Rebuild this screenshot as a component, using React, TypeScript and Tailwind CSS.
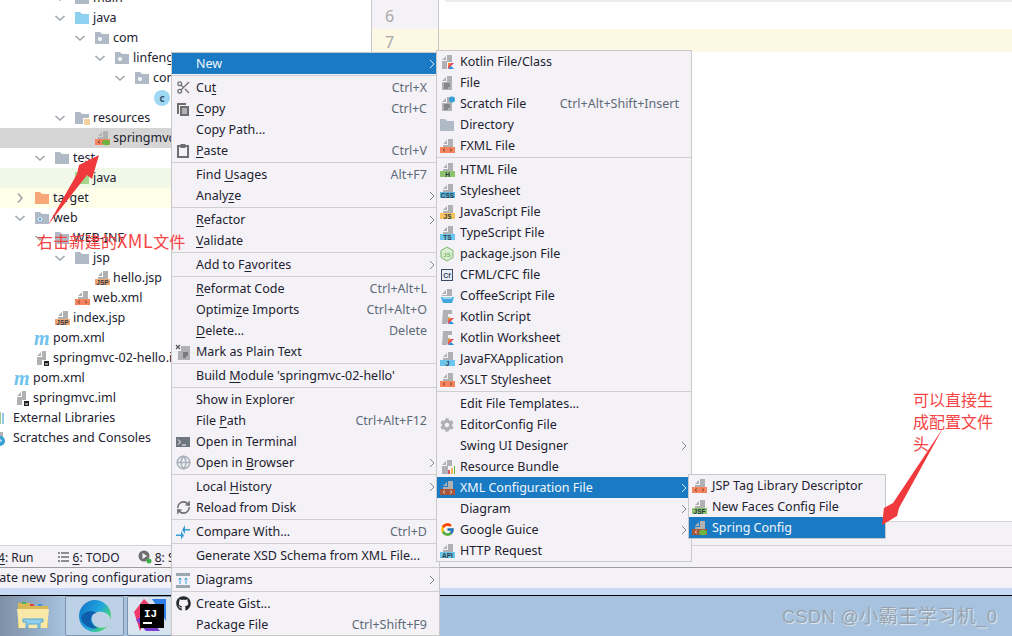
import type { ReactNode } from 'react';
import { Scissors, RefreshCw, Globe } from 'lucide-react';
import { FaGithub, FaCog } from 'react-icons/fa';
import { FcGoogle } from 'react-icons/fc';

type Item = { label: string; shortcut?: string; icon?: ReactNode; arrow?: boolean; active?: boolean };

function FileIcon({ color, text = '', children }: { color: string; text?: string; children?: ReactNode }) {
  return (
    <svg width="16" height="16" viewBox="0 0 16 16">
      <path fill="#afb1b3" d="M4 6 8 2v4zM9 1h5v8H4V7h5z" />
      <rect x="1" y="9" width="15" height="6" fill={color} />
      {text && (
        <text x="8.5" y="14.6" textAnchor="middle" fontSize="6.5" fontWeight="700" fill="#2b3a42" fontFamily="Liberation Sans">
          {text}
        </text>
      )}
      {children}
    </svg>
  );
}

const XmlTag = ({ stroke = '#7a3b1c' }: { stroke?: string }) => (
  <path fill="none" stroke={stroke} strokeWidth="0.8" d="M6 10.500 4 12l2 1.500M11 10.500l2 1.500-2 1.500" />
);
const Xml = () => <FileIcon color="#f4845f"><XmlTag /></FileIcon>;
const Leaf = () => <ellipse cx="12" cy="12.500" rx="4" ry="2.800" fill="#6cb33f" />;

function PlainFile({ children }: { children?: ReactNode }) {
  return (
    <svg width="16" height="16" viewBox="0 0 16 16">
      <path fill="#afb1b3" d="M3 6 7 2v4zM8 1h5v14H3V7h5z" />
      <path stroke="#5a6068" d="M5 9h6M5 11h6M5 13h4" />
      {children}
    </svg>
  );
}

function KotlinFile() {
  return (
    <svg width="16" height="16" viewBox="0 0 16 16">
      <path fill="#afb1b3" d="M3 6 7 2v4zM8 1h5v7H8v7H3V7h5z" />
      <path fill="#f88909" d="M9 9h3l-3 3z" />
      <path fill="#1f8fe0" d="M9 15l3-3 3 3z" />
      <path fill="#e44857" d="M12 9h3l-6 6v-3z" />
    </svg>
  );
}

function KotlinScript() {
  return (
    <svg width="16" height="16" viewBox="0 0 16 16">
      <path fill="#afb1b3" d="M4 1h9v4H9v3h2L8 15H3z" />
      <path fill="#f88909" d="M9 9h3l-3 3z" />
      <path fill="#1f8fe0" d="M9 15l3-3 3 3z" />
      <path fill="#e44857" d="M12 9h3l-6 6v-3z" />
    </svg>
  );
}

function Folder({ color = '#b0bac6', dot, lines }: { color?: string; dot?: string; lines?: boolean }) {
  return (
    <svg width="16" height="16" viewBox="0 0 16 16">
      <path fill={color} d="M1 2h5l2 2h7v10H1z" />
      {dot && <circle cx="6" cy="9" r="2" fill="#fff" />}
      {dot && <circle cx="6" cy="9" r="1.200" fill={dot} />}
      {lines && (
        <g>
          <rect x="9" y="8" width="7" height="8" fill="#fff" />
          <path stroke="#e8a33d" d="M10 10h6M10 12h6M10 14h6" />
        </g>
      )}
    </svg>
  );
}

const Maven = () => (
  <span className="w-4 text-[20px] leading-4 font-bold italic text-[#6fc3ee] font-['Liberation_Serif',serif]">m</span>
);

const CopyIcon = () => (
  <svg width="16" height="16" viewBox="0 0 16 16">
    <path fill="#6e6e6e" d="M2 2h9v2H4v9H2z" />
    <path fill="#6e6e6e" d="M5 5h9v10H5z" />
    <path stroke="#f5f2f7" d="M7 8h5M7 10h5M7 12h5" />
  </svg>
);
const PasteIcon = () => (
  <svg width="16" height="16" viewBox="0 0 16 16">
    <path fill="none" stroke="#6e6e6e" strokeWidth="2" d="M3 3h10v11H3z" />
    <path fill="#6e6e6e" d="M5.500 1h5v4h-5z" />
  </svg>
);
const MarkPlain = () => (
  <svg width="16" height="16" viewBox="0 0 16 16">
    <path fill="#afb1b3" d="M6 2h9v14H3V7h3z" />
    <path stroke="#444" d="M8 9h5M8 11h5M8 13h3" />
    <path stroke="#555" strokeWidth="1.200" d="M1 1l4 4M5 1 1 5" />
  </svg>
);
const TerminalIcon = () => (
  <svg width="16" height="16" viewBox="0 0 16 16">
    <rect x="1" y="3" width="14" height="10" fill="#6e7680" />
    <path fill="none" stroke="#fff" d="M3 5.500 5.500 8 3 10.500M7 11h4" />
  </svg>
);
const CompareIcon = () => (
  <svg width="16" height="16" viewBox="0 0 16 16">
    <path fill="#389fd6" d="M10 1v4h5v1.500h-5V10L7 6zM6 7v3.500H1V12h5v3.500L9 11.500z" />
  </svg>
);
const DiagramIcon = () => (
  <svg width="16" height="16" viewBox="0 0 16 16">
    <rect x="1" y="1" width="14" height="3" fill="#9aa7b0" />
    <rect x="1" y="13" width="14" height="3" fill="#9aa7b0" />
    <path stroke="#389fd6" d="M5 12V6M3.500 7.500 5 6l1.500 1.500M11 12V6M9.500 7.500 11 6l1.500 1.500" fill="none" />
  </svg>
);
const NodeIcon = () => (
  <svg width="16" height="16" viewBox="0 0 16 16">
    <path fill="#d9eed0" stroke="#7fb56b" d="M8 1l6 3.500v7L8 15l-6-3.500v-7z" />
    <text x="8" y="10.500" textAnchor="middle" fontSize="6" fontWeight="700" fill="#7fb56b" fontFamily="Liberation Sans">JS</text>
  </svg>
);
const CfIcon = () => (
  <svg width="16" height="16" viewBox="0 0 16 16">
    <rect x="2.500" y="2.500" width="11" height="11" fill="#e6edf7" stroke="#3d4c63" />
    <text x="8" y="11" textAnchor="middle" fontSize="7" fontWeight="700" fill="#3d4c63" fontFamily="Liberation Sans">Cf</text>
  </svg>
);
const CoffeeIcon = () => (
  <svg width="16" height="16" viewBox="0 0 16 16">
    <path fill="#afb1b3" d="M3 6 7 2v4zM8 1h5v7H3V7h5z" />
    <path fill="#40a9e0" d="M2 9h13l-2 6H4z" />
    <path fill="#fff" d="M4 9.500h9v1H4z" />
  </svg>
);
const BundleIcon = () => (
  <svg width="16" height="16" viewBox="0 0 16 16">
    <path fill="#afb1b3" d="M3 6 7 2v4zM8 1h5v6H9v8H3V7h5z" />
    <rect x="9" y="11" width="2" height="4" fill="#e05555" />
    <rect x="12" y="9" width="2" height="6" fill="#f2b84b" />
    <rect x="15" y="7" width="1" height="8" fill="#62b543" />
  </svg>
);

const mainGroups: Item[][] = [
  [{ label: 'New', arrow: true, active: true }],
  [
    { label: 'Cu_t', shortcut: 'Ctrl+X', icon: <Scissors size={15} color="#6e6e6e" strokeWidth={2} /> },
    { label: '_Copy', shortcut: 'Ctrl+C', icon: <CopyIcon /> },
    { label: 'Copy Path...' },
    { label: '_Paste', shortcut: 'Ctrl+V', icon: <PasteIcon /> },
  ],
  [{ label: 'Find _Usages', shortcut: 'Alt+F7' }, { label: 'Analy_ze', arrow: true }],
  [{ label: '_Refactor', arrow: true }, { label: '_Validate' }],
  [{ label: 'Add to F_avorites', arrow: true }],
  [
    { label: '_Reformat Code', shortcut: 'Ctrl+Alt+L' },
    { label: 'Optimi_ze Imports', shortcut: 'Ctrl+Alt+O' },
    { label: '_Delete...', shortcut: 'Delete' },
    { label: 'Mark as Plain Text', icon: <MarkPlain /> },
  ],
  [{ label: "Build _Module 'springmvc-02-hello'" }],
  [
    { label: 'Show in Explorer' },
    { label: 'File _Path', shortcut: 'Ctrl+Alt+F12' },
    { label: 'Open in Terminal', icon: <TerminalIcon /> },
    { label: 'Open in _Browser', arrow: true, icon: <Globe size={15} color="#a9b2bb" strokeWidth={2.5} /> },
  ],
  [
    { label: 'Local _History', arrow: true },
    { label: 'Reload from Disk', icon: <RefreshCw size={15} color="#6e6e6e" strokeWidth={2.5} /> },
  ],
  [{ label: 'Compare With...', shortcut: 'Ctrl+D', icon: <CompareIcon /> }],
  [{ label: 'Generate XSD Schema from XML File...' }],
  [{ label: 'Diagrams', arrow: true, icon: <DiagramIcon /> }],
  [
    { label: 'Create Gist...', icon: <FaGithub size={15} color="#24292e" /> },
    { label: 'Package File', shortcut: 'Ctrl+Shift+F9' },
  ],
];

const newGroups: Item[][] = [
  [
    { label: 'Kotlin File/Class', icon: <KotlinFile /> },
    { label: 'File', icon: <PlainFile /> },
    {
      label: 'Scratch File',
      shortcut: 'Ctrl+Alt+Shift+Insert',
      icon: <PlainFile><circle cx="13" cy="3.500" r="3" fill="#389fd6" /></PlainFile>,
    },
    { label: 'Directory', icon: <Folder /> },
    { label: 'FXML File', icon: <Xml /> },
  ],
  [
    { label: 'HTML File', icon: <FileIcon color="#8dc36f" text="H" /> },
    { label: 'Stylesheet', icon: <FileIcon color="#5bb5e0" text="CSS" /> },
    { label: 'JavaScript File', icon: <FileIcon color="#f6c35f" text="JS" /> },
    { label: 'TypeScript File', icon: <FileIcon color="#6cc5ec" text="TS" /> },
    { label: 'package.json File', icon: <NodeIcon /> },
    { label: 'CFML/CFC file', icon: <CfIcon /> },
    { label: 'CoffeeScript File', icon: <CoffeeIcon /> },
    { label: 'Kotlin Script', icon: <KotlinScript /> },
    { label: 'Kotlin Worksheet', icon: <KotlinScript /> },
    { label: 'JavaFXApplication', icon: <FileIcon color="#6cc5ec" text="J" /> },
    { label: 'XSLT Stylesheet', icon: <Xml /> },
  ],
  [
    { label: 'Edit File Templates...' },
    { label: 'EditorConfig File', icon: <FaCog size={14} color="#afb1b3" /> },
    { label: 'Swing UI Designer', arrow: true },
    { label: 'Resource Bundle', icon: <BundleIcon /> },
    { label: 'XML Configuration File', arrow: true, active: true, icon: <FileIcon color="#a9573c"><XmlTag stroke="#f3d9cc" /></FileIcon> },
    { label: 'Diagram', arrow: true },
    { label: 'Google Guice', arrow: true, icon: <FcGoogle size={15} /> },
    { label: 'HTTP Request', icon: <FileIcon color="#6cc5ec" text="API" /> },
  ],
];

const xmlGroups: Item[][] = [
  [
    { label: 'JSP Tag Library Descriptor', icon: <Xml /> },
    { label: 'New Faces Config File', icon: <FileIcon color="#8dc36f" text="JSF" /> },
    { label: 'Spring Config', active: true, icon: <FileIcon color="#a9573c"><XmlTag stroke="#f3d9cc" /><Leaf /></FileIcon> },
  ],
];

function Label({ text }: { text: string }) {
  const i = text.indexOf('_');
  if (i < 0) return <span>{text}</span>;
  return (
    <span>
      {text.slice(0, i)}
      <span className="underline underline-offset-2">{text[i + 1]}</span>
      {text.slice(i + 2)}
    </span>
  );
}

function Menu({ groups, className, iconMl }: { groups: Item[][]; className: string; iconMl: string }) {
  return (
    <div className={`absolute bg-[#f5f2f7] border border-[#c8c8c8] text-[12.5px] text-[#1c2230] ${className}`}>
      {groups.map((group, g) => (
        <div key={g} className={g > 0 ? 'border-t border-[#cfcfd2] mt-px pt-px' : ''}>
          {group.map((item) => (
            <div
              key={item.label}
              className={`flex items-center h-[21px] whitespace-nowrap ${item.active ? 'bg-[#1a7bc4] text-[#f2f7fb]' : ''}`}
            >
              <span className={`${iconMl} w-4 h-4 flex items-center justify-center shrink-0`}>{item.icon}</span>
              <span className="ml-[5px] mt-[2px]"><Label text={item.label} /></span>
              {item.shortcut && <span className="ml-auto mr-3 mt-[2px] text-[#5d6b78]">{item.shortcut}</span>}
              {item.arrow && (
                <svg className="ml-auto mr-[3px]" width="8" height="10" viewBox="0 0 8 10">
                  <path fill="none" stroke={item.active ? '#d5e6f3' : '#7d8790'} d="M2 1l4 4-4 4" />
                </svg>
              )}
            </div>
          ))}
        </div>
      ))}
    </div>
  );
}

const Chevron = ({ dir }: { dir?: 'down' | 'right' }) => (
  <svg className="shrink-0" width="16" height="16" viewBox="0 0 16 16">
    {dir === 'down' && <path fill="none" stroke="#a0a6ac" strokeWidth="1.600" d="M3.500 6 8 10l4.500-4" />}
    {dir === 'right' && <path fill="none" stroke="#a0a6ac" strokeWidth="1.600" d="M6 3.500 10 8l-4 4.500" />}
  </svg>
);

const pkg = <Folder dot="#eef2f5" />;
const jspIcon = <FileIcon color="#f4a672" text="JSP" />;
const iml = (
  <svg width="16" height="16" viewBox="0 0 16 16">
    <path fill="#afb1b3" d="M3 6 7 2v4zM8 1h4v9H8v5H3V7h5z" />
    <rect x="9" y="10" width="6" height="6" fill="#fff" />
    <rect x="10" y="11" width="5" height="5" fill="#222" />
    <rect x="11" y="13.500" width="3" height="1" fill="#fff" />
  </svg>
);

const treeRows: { label: string; ml: string; dir?: 'down' | 'right'; icon?: ReactNode; bg?: string }[] = [
  { label: 'main', ml: 'ml-[52px]', dir: 'down', icon: <Folder /> },
  { label: 'java', ml: 'ml-[52px]', dir: 'down', icon: <Folder color="#8dd0ef" /> },
  { label: 'com', ml: 'ml-[72px]', dir: 'down', icon: pkg },
  { label: 'linfeng', ml: 'ml-[92px]', dir: 'down', icon: pkg },
  { label: 'controller', ml: 'ml-[112px]', dir: 'down', icon: pkg },
  {
    label: 'HelloController',
    ml: 'ml-[132px]',
    icon: (
      <span className="w-4 h-4 rounded-full bg-[#9fd8f3] text-[10px] leading-4 text-center font-bold text-[#33566a]">c</span>
    ),
  },
  { label: 'resources', ml: 'ml-[52px]', dir: 'down', icon: <Folder lines /> },
  { label: 'springmvc-servlet.xml', ml: 'ml-[72px]', icon: <FileIcon color="#f4845f"><XmlTag /><Leaf /></FileIcon>, bg: 'bg-[#d5d5d5]' },
  { label: 'test', ml: 'ml-[32px]', dir: 'down', icon: <Folder /> },
  { label: 'java', ml: 'ml-[52px]', icon: <Folder color="#a5d68a" />, bg: 'bg-[#f0f8e8]' },
  { label: 'target', ml: 'ml-[12px]', dir: 'right', icon: <Folder color="#f8a878" />, bg: 'bg-[#fffee8]' },
  { label: 'web', ml: 'ml-[12px]', dir: 'down', icon: <Folder dot="#3aa0e0" /> },
  { label: 'WEB-INF', ml: 'ml-[32px]', dir: 'down', icon: <Folder /> },
  { label: 'jsp', ml: 'ml-[52px]', dir: 'down', icon: <Folder /> },
  { label: 'hello.jsp', ml: 'ml-[72px]', icon: jspIcon },
  { label: 'web.xml', ml: 'ml-[52px]', icon: <Xml /> },
  { label: 'index.jsp', ml: 'ml-[32px]', icon: jspIcon },
  { label: 'pom.xml', ml: 'ml-[12px]', icon: <Maven /> },
  { label: 'springmvc-02-hello.iml', ml: 'ml-[12px]', icon: iml },
  { label: 'pom.xml', ml: 'ml-[-8px]', icon: <Maven /> },
  { label: 'springmvc.iml', ml: 'ml-[-8px]', icon: iml },
  {
    label: 'External Libraries',
    ml: 'ml-[-28px]',
    icon: (
      <svg width="16" height="16" viewBox="0 0 16 16">
        <path stroke="#8a9199" strokeWidth="1.500" d="M3 2v12" />
        <path stroke="#7fb56b" strokeWidth="1.500" d="M6 2v12" />
        <path stroke="#6fb6e0" strokeWidth="1.500" d="M9 3v11" />
      </svg>
    ),
  },
  {
    label: 'Scratches and Consoles',
    ml: 'ml-[-28px]',
    icon: (
      <svg width="16" height="16" viewBox="0 0 16 16">
        <path fill="#afb1b3" d="M2 2h7v5H2z" />
        <circle cx="6" cy="11" r="5" fill="#389fd6" />
        <path stroke="#fff" fill="none" d="M6 8.500V11h2" />
      </svg>
    ),
  },
];

export default function App() {
  return (
    <div className="relative w-[1012px] h-[636px] overflow-hidden flex flex-col bg-white text-[12.5px] text-[#1c2230] font-['Noto_Sans','Noto_Sans_CJK_SC',sans-serif]">
      {/* ide body */}
      <div className="flex h-[545px] overflow-hidden">
        <div className="w-[371px] shrink-0 overflow-hidden -mt-3">
          {treeRows.map((row, i) => (
            <div key={i} className={`h-5 ${row.bg ?? ''}`}>
              <div className={`flex items-center h-5 whitespace-nowrap ${row.ml}`}>
                <Chevron dir={row.dir} />
                <span className="ml-[6px] w-4 h-4 flex items-center shrink-0">{row.icon}</span>
                <span className="ml-[3px] mt-[1px]">{row.label}</span>
              </div>
            </div>
          ))}
        </div>
        <div className="flex-1 flex flex-col border-l border-[#c8c8c8]">
          <div className="h-[521px] text-[16px] text-[#a8a8a8]">
            <div className="flex h-[3px]">
              <div className="w-[67px] bg-[#f5f2f7] border-r border-[#c8c8c8]"></div>
              <div className="flex-1 ml-[6px] h-[2px] bg-[#ececec]"></div>
            </div>
            <div className="flex h-[26px]">
              <div className="w-[67px] bg-[#f5f2f7] border-r border-[#c8c8c8] pl-[13px] leading-[26px]">6</div>
            </div>
            <div className="flex h-[23px] bg-[#fdf8e4]">
              <div className="w-[67px] border-r border-[#c8c8c8] pl-[13px] leading-[26px]">7</div>
            </div>
            <div className="flex h-[469px]">
              <div className="w-[67px] bg-[#f5f2f7] border-r border-[#c8c8c8]"></div>
            </div>
          </div>
          <div className="h-6 bg-[#f5f2f7] border-t border-[#d2d2d2]"></div>
        </div>
      </div>

      {/* tool window bar */}
      <div className="h-[23px] flex items-center bg-[#f5f2f7] border-t border-[#d2d2d2] border-b border-b-[#9c9c9c] text-[12px] whitespace-nowrap">
        <span className="-ml-[2px] mt-[3px]"><span className="underline underline-offset-2">4</span>: Run</span>
        <svg className="ml-[24px]" width="11" height="12" viewBox="0 0 11 12">
          <path stroke="#6e6e6e" strokeWidth="1.500" d="M0 2h2M3 2h8M0 6h2M3 6h8M0 10h2M3 10h8" />
        </svg>
        <span className="ml-[4px] mt-[3px]"><span className="underline underline-offset-2">6</span>: TODO</span>
        <svg className="ml-[18px]" width="14" height="15" viewBox="0 0 14 15">
          <circle cx="6" cy="7" r="5.500" fill="#6e6e6e" />
          <path fill="#f5f2f7" d="M4.500 4 9 7l-4.500 3z" />
          <circle cx="11" cy="12" r="2.500" fill="#3cb34a" />
        </svg>
        <span className="ml-[3px] mt-[3px]"><span className="underline underline-offset-2">8</span>: Services</span>
      </div>
      {/* status line */}
      <div className="h-5 flex items-center bg-[#f5f2f7] whitespace-nowrap">
        <span className="-ml-[21px] tracking-[0.1px]">Create new Spring configuration file</span>
      </div>
      <div className="h-[7px] bg-[#c6dbf3]"></div>
      <div className="h-px bg-black"></div>

      {/* taskbar */}
      <div className="flex-1 flex bg-[#a6c2de]">
        <div className="w-16 flex items-center justify-center bg-gradient-to-r from-[#7e90a6] to-[#a6c2de]">
          <svg className="ml-[2px]" width="34" height="32" viewBox="0 0 34 32">
            <path fill="#d9b955" d="M2 3h12l2 3h16v22H2z" />
            <path fill="#49b04f" d="M6 2h4v2H6z" />
            <path fill="#d9453d" d="M14 4h4v2h-4z" />
            <path fill="#3d93e0" d="M22 4h4v2h-4z" />
            <path fill="#f9e9a8" d="M1 9h32l-2 19H3z" />
            <path fill="#8fd0ee" stroke="#5aa6cc" d="M7 19h20v3h-3v6h-2v-4H12v4h-2v-6H7z" />
          </svg>
        </div>
        <div className="ml-px w-[59px] flex items-center justify-center bg-[#bcd1e6] border border-[#7f95ad] rounded-[2px]">
          <svg width="34" height="34" viewBox="0 0 34 34">
            <defs>
              <linearGradient id="edge" x1="0" y1="0" x2="1" y2="0.600">
                <stop offset="0" stopColor="#0f6fc6" />
                <stop offset="0.600" stopColor="#21a5dd" />
                <stop offset="1" stopColor="#4cd964" />
              </linearGradient>
            </defs>
            <circle cx="17" cy="17" r="16" fill="url(#edge)" />
            <path fill="#bcd1e6" d="M33 21c-2-8-9-9-14-8-5 1-7 6-4 11 2 4 8 6 13 4 2-1 4-4 5-7z" />
            <path fill="#0f5fae" d="M19 14c-4 0-6 3-6 7 0 3 3 7 7 8-8 2-16-3-17-11 3-6 10-7 16-4z" />
          </svg>
        </div>
        <div className="ml-[3px] w-[45px] flex items-center justify-center bg-[#d7e3ef] border border-[#7f95ad] rounded-[2px]">
          <svg width="36" height="36" viewBox="0 0 36 36">
            <path fill="#ef3a6a" d="M2 14 12 1l8 8-12 24z" />
            <path fill="#7a3fd0" d="M14 33 4 22l10-6 14 17z" />
            <path fill="#2f7fe8" d="M20 1h14v22z" />
            <rect x="8" y="6" width="24" height="24" fill="#000" />
            <text x="12" y="19" fontSize="11" fontWeight="700" fill="#fff" fontFamily="Liberation Mono">IJ</text>
            <rect x="11" y="24" width="9" height="2" fill="#fff" />
          </svg>
        </div>
      </div>

      <Menu className="left-[171px] top-[52px] w-[269px]" iconMl="ml-[3px]" groups={mainGroups} />
      <Menu className="left-[436px] top-[50px] w-[256px]" iconMl="ml-[2px]" groups={newGroups} />
      <Menu className="left-[688px] top-[474px] w-[198px]" iconMl="ml-[2px]" groups={xmlGroups} />

      {/* annotations */}
      <span className="absolute left-[37px] top-[228px] text-[16px] leading-6 text-[#f54444] whitespace-nowrap font-['Noto_Sans_CJK_SC','Noto_Sans',sans-serif]">
        右击新建的<span className="text-[18px] tracking-[0.5px]">XML</span>文件
      </span>
      <span className="absolute left-[913px] top-[388px] w-[84px] text-[16px] leading-[22px] text-[#f54444] font-['Noto_Sans_CJK_SC','Noto_Sans',sans-serif]">
        可以直接生成配置文件头
      </span>
      <svg className="absolute left-0 top-0 pointer-events-none" width="1012" height="636" viewBox="0 0 1012 636">
        <polygon fill="#f0393c" points="48,225 77,174 79,165 99,155 92,179 87,175" />
        <polygon fill="#f0393c" points="943,428 893,503 884,508 882,525 897,516 899,508" />
      </svg>

      <span className="absolute left-[782px] top-[605px] text-[18px] tracking-[0.5px] leading-6 text-[#97a3b0] [text-shadow:1px_1px_1px_#e6ebf0] whitespace-nowrap font-['Liberation_Sans','Noto_Sans_CJK_SC',sans-serif]">
        CSDN @<span className="text-[19px]">小霸王学习机</span>_0
      </span>
    </div>
  );
}
